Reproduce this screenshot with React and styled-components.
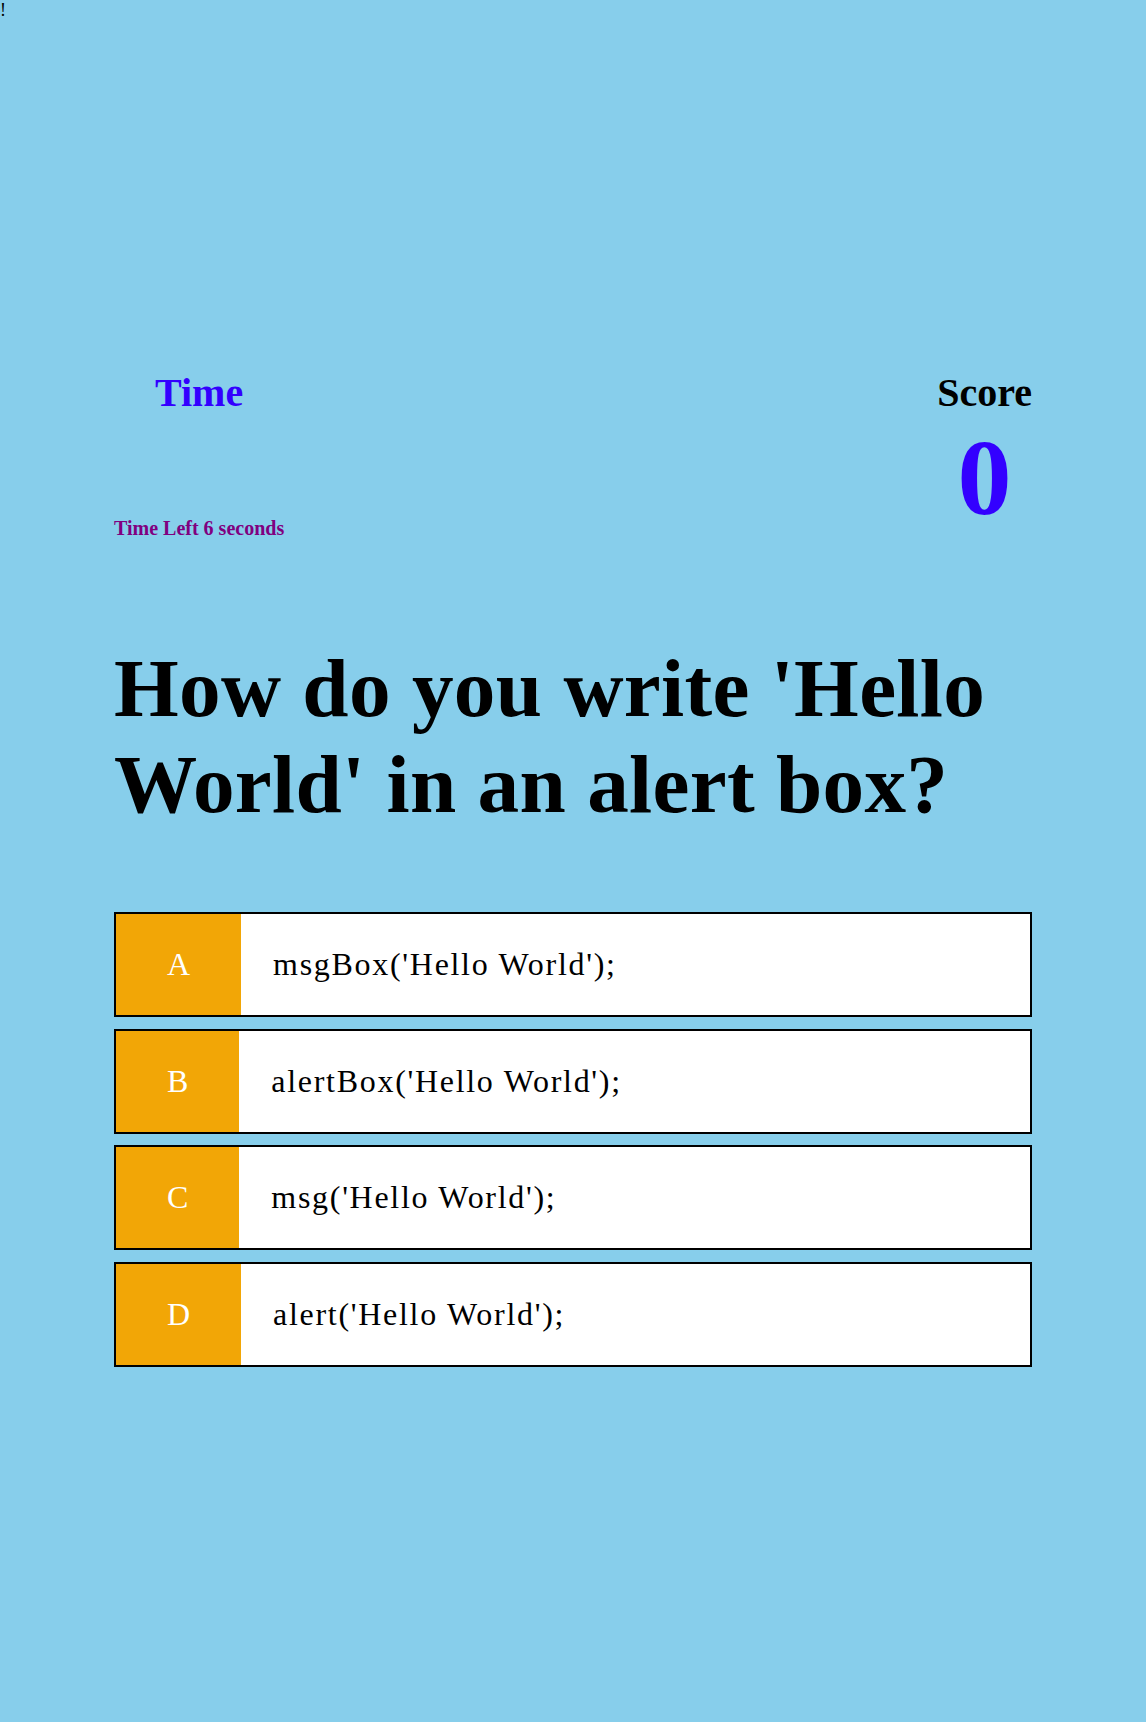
import React from 'react';
import styled, { createGlobalStyle } from 'styled-components';

const GlobalStyle = createGlobalStyle`
  html, body {
    margin: 0;
    padding: 0;
    background: #87ceeb;
    font-family: "Liberation Serif", "Times New Roman", serif;
  }
`;

const choices = [
    { letter: 'A', text: "msgBox('Hello World');" },
    { letter: 'B', text: "alertBox('Hello World');" },
    { letter: 'C', text: "msg('Hello World');" },
    { letter: 'D', text: "alert('Hello World');" },
];

export default function App() {
    return (
        <>
            <GlobalStyle />
            <Bang>!</Bang>
            <Container>
                <Hud>
                    <TimeItem>
                        <HudTitle $color="#3300ff">Time</HudTitle>
                        <TimeLeft>Time Left 6 seconds</TimeLeft>
                    </TimeItem>
                    <ScoreItem>
                        <HudTitle $color="#000">Score</HudTitle>
                        <ScoreValue>0</ScoreValue>
                    </ScoreItem>
                </Hud>
                <Question>How do you write 'Hello World' in an alert box?</Question>
                {choices.map((c) => (
                    <Choice key={c.letter}>
                        <ChoicePrefix>{c.letter}</ChoicePrefix>
                        <ChoiceText>{c.text}</ChoiceText>
                    </Choice>
                ))}
            </Container>
        </>
    );
}

const Bang = styled.div`
  font-size: 18px;
  line-height: normal;
  color: #000;
`;

const Container = styled.div`
  width: 918px;
  margin: 0 auto;
  padding-top: 348px;
`;

const Hud = styled.div`
  display: flex;
  justify-content: space-between;
  align-items: stretch;
`;

const TimeItem = styled.div`
  display: flex;
  flex-direction: column;
  justify-content: space-between;
  align-items: center;
  text-align: center;
`;

const ScoreItem = styled.div`
  display: flex;
  flex-direction: column;
  align-items: center;
  text-align: center;
`;

const HudTitle = styled.div`
  font-size: 40px;
  font-weight: bold;
  line-height: normal;
  color: ${(p) => p.$color};
`;

const TimeLeft = styled.div`
  font-size: 20px;
  font-weight: bold;
  line-height: normal;
  color: #800080;
`;

const ScoreValue = styled.div`
  font-size: 108px;
  font-weight: bold;
  line-height: normal;
  color: #3300ff;
`;

const Question = styled.h1`
  font-size: 83.2px;
  font-weight: bold;
  line-height: normal;
  letter-spacing: 0.3px;
  color: #000;
  margin: 100px 0 80px;
`;

const Choice = styled.div`
  display: flex;
  border: 2px solid #000;
  background: #fff;
  margin-bottom: 11.5px;
  font-size: 32px;
  line-height: normal;
`;

const ChoicePrefix = styled.div`
  padding: 32px 51px;
  background: #f2a606;
  color: #fff;
`;

const ChoiceText = styled.div`
  padding: 32px;
  flex: 1;
  color: #000;
  letter-spacing: 1.7px;
`;
